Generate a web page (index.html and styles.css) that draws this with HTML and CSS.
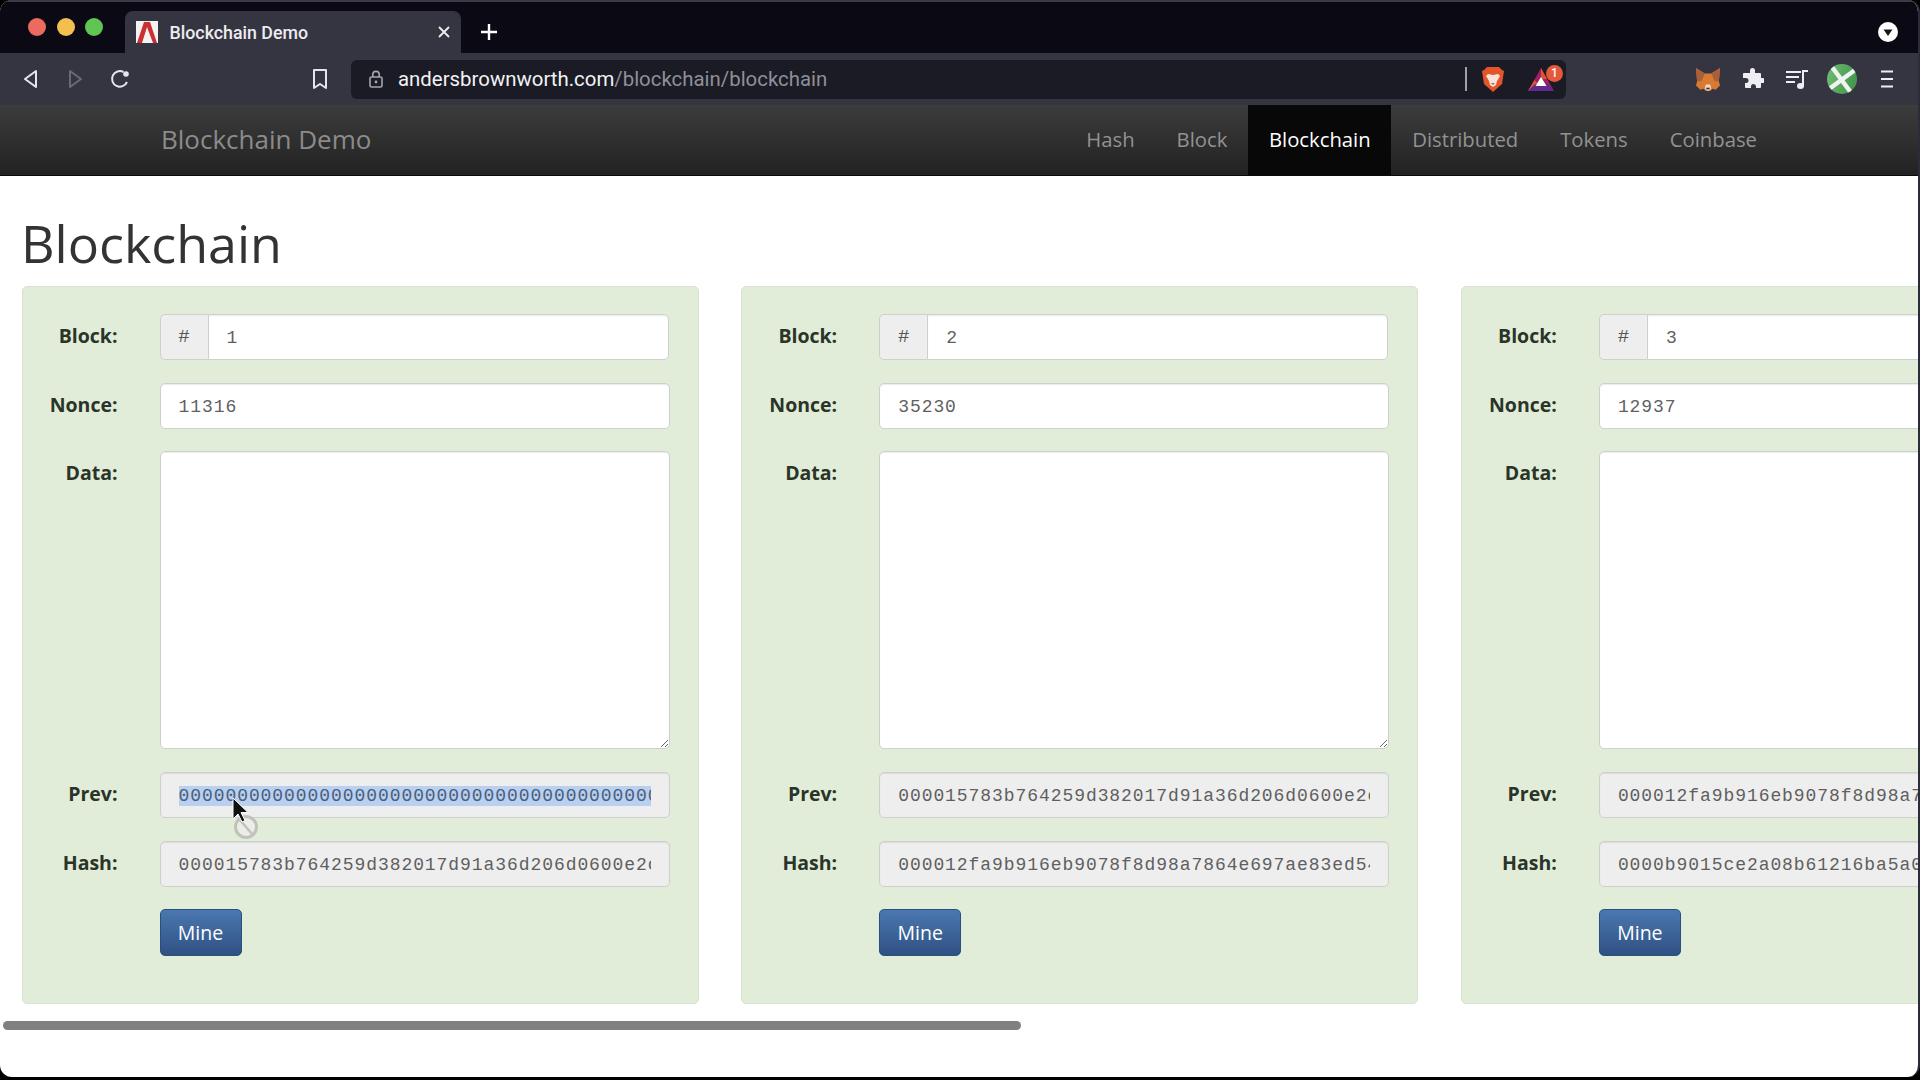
FILE: index.html
```html
<!DOCTYPE html>
<html lang="en">
<head>
<meta charset="utf-8">
<title>Blockchain Demo</title>
<link rel="stylesheet" href="styles.css">
</head>
<body>
<div class="window">
  <div class="tabstrip">
    <div class="lights"><i class="light red"></i><i class="light yellow"></i><i class="light green"></i></div>
    <div class="tab">
      <svg class="favicon" viewBox="0 0 22 22"><rect width="22" height="22" fill="#f4f2f2"/><path d="M8 1h6l7 21h-4L11 6 6 22H1z" fill="#c9302f"/></svg>
      <span class="tab-title">Blockchain Demo</span>
      <svg class="tab-close" viewBox="0 0 12 12"><path d="M1 1l10 10M11 1L1 11" stroke="#eee" stroke-width="1.8" fill="none"/></svg>
    </div>
    <svg class="newtab" viewBox="0 0 16 16"><path d="M8 0v16M0 8h16" stroke="#fff" stroke-width="2.4" fill="none"/></svg>
    <svg class="tabmenu" viewBox="0 0 20 20"><circle cx="10" cy="10" r="10" fill="#fff"/><path d="M5.500 7.500h9L10 14z" fill="#16151f"/></svg>
  </div>

  <div class="toolbar">
    <div class="nav-buttons">
      <svg class="tool-icon" viewBox="0 0 16 20"><path d="M13 2v16L2 10z" stroke="#e6e6ea" stroke-width="2" stroke-linejoin="round" fill="none"/></svg>
      <svg class="tool-icon" viewBox="0 0 16 20"><path d="M3 2v16l11-8z" stroke="#6a6a76" stroke-width="2" stroke-linejoin="round" fill="none"/></svg>
      <svg class="tool-icon reload" viewBox="0 0 20 20"><path d="M17 13A7.800 7.800 0 1 1 13.500 3" stroke="#e6e6ea" stroke-width="2" fill="none"/><circle cx="16" cy="5" r="2.800" fill="#e6e6ea"/></svg>
    </div>
    <svg class="bookmark" viewBox="0 0 16 22"><path d="M2 2h12v18l-6-4-6 4z" stroke="#e6e6ea" stroke-width="2" stroke-linejoin="round" fill="none"/></svg>
    <div class="urlbar">
      <svg class="lock" viewBox="0 0 14 18"><rect x="1" y="7" width="12" height="10" rx="1.500" stroke="#a5a5ad" stroke-width="1.600" fill="none"/><path d="M3.800 7V4.600a3.200 3.200 0 0 1 6.400 0V7" stroke="#a5a5ad" stroke-width="1.600" fill="none"/><circle cx="7" cy="12" r="1.400" fill="#a5a5ad"/></svg>
      <span class="url"><b class="url-host">andersbrownworth.com</b>/blockchain/blockchain</span>
      <span class="url-sep"></span>
      <svg class="brave" viewBox="0 0 22 26"><path d="M5 1h12l3 3 2 1-2 13-9 8-9-8L0 5l2-1z" fill="#e2552b"/><path d="M6 8l5 1 5-1 2 2-3 5-1 4-3 2-3-2-1-4-3-5z" fill="#f8e3da"/><path d="M9 17h4l-2 2z" fill="#e2552b"/></svg>
      <div class="bat">
        <svg class="bat-icon" viewBox="0 0 26 23"><path d="M13 0l13 23H0z" fill="#9e1f63"/><path d="M13 0l6 11-6 0z" fill="#e2552b"/><path d="M0 23l6.500-11 4 5z" fill="#e2552b"/><path d="M0 23h26l-6-7H7z" fill="#5f2a8c"/><path d="M13 9l5.500 9h-11z" fill="#fff"/></svg>
        <span class="badge">1</span>
      </div>
    </div>
    <div class="extensions">
      <svg class="ext fox" viewBox="0 0 22 21"><path d="M0 0l8 5h6l8-5-1 12 1 4-4 4-3-1-2 2h-4l-2-2-3 1-4-4 1-4z" fill="#d97a32"/><path d="M0 0l8 5-3 7-4 0zM22 0l-8 5 3 7 4 0z" fill="#a9603a"/><path d="M9 15h4l1 4-3 2-3-2z" fill="#f1dcc8"/><path d="M9.500 18h3v1.500h-3z" fill="#2d2d2d"/></svg>
      <svg class="ext puzzle" viewBox="0 0 22 22"><path d="M8 2.500a2.500 2.500 0 0 1 5 0V5h5a1 1 0 0 1 1 1v4h1.500a2.500 2.500 0 0 1 0 5H19v4a1 1 0 0 1-1 1h-4v-1.500a2.500 2.500 0 0 0-5 0V20H4a1 1 0 0 1-1-1v-4h1a2.500 2.500 0 0 0 0-5H1V6a1 1 0 0 1 1-1h6z" fill="#eeeef2"/></svg>
      <svg class="ext playlist" viewBox="0 0 22 20"><path d="M0 3h15M0 8h13M0 13h9" stroke="#eeeef2" stroke-width="2" fill="none"/><path d="M17 17V2h5" stroke="#eeeef2" stroke-width="2" fill="none"/><ellipse cx="14.500" cy="17" rx="3.500" ry="3" fill="#eeeef2"/></svg>
      <svg class="avatar" viewBox="0 0 30 30"><defs><clipPath id="av"><circle cx="15" cy="15" r="15"/></clipPath><linearGradient id="avg" x1="0" y1="0" x2="1" y2="0.300"><stop offset="0" stop-color="#6fbf72"/><stop offset="1" stop-color="#46984f"/></linearGradient></defs><g clip-path="url(#av)"><rect width="30" height="30" fill="url(#avg)"/><path d="M5 3l20 27M28 6L2 25" stroke="#f0f3ef" stroke-width="4.500" fill="none"/></g></svg>
      <svg class="ext menu" viewBox="0 0 14 18"><path d="M1 1.500h12M1 9h12M1 16.500h12" stroke="#eeeef2" stroke-width="2" fill="none"/></svg>
    </div>
  </div>

  <nav class="navbar">
    <a class="brand">Blockchain Demo</a>
    <ul class="nav-links">
      <li class="nav-link">Hash</li>
      <li class="nav-link">Block</li>
      <li class="nav-link active">Blockchain</li>
      <li class="nav-link">Distributed</li>
      <li class="nav-link">Tokens</li>
      <li class="nav-link">Coinbase</li>
    </ul>
  </nav>

  <main class="main">
    <h1 class="title">Blockchain</h1>
    <div class="cards">
      <section class="card">
        <label class="lbl">Block:</label>
        <div class="group"><span class="addon">#</span><input class="ctl grouped" value="1" readonly></div>
        <label class="lbl">Nonce:</label>
        <input class="ctl" value="11316" readonly>
        <label class="lbl">Data:</label>
        <textarea class="ctl area" readonly></textarea>
        <label class="lbl">Prev:</label>
        <input class="ctl off" value="0000000000000000000000000000000000000000000000000000000000000000" readonly autofocus onfocus="this.select()">
        <label class="lbl">Hash:</label>
        <input class="ctl off" value="000015783b764259d382017d91a36d206d0600e2c2af3f0ce3c8d5e86d1d06b2" readonly>
        <button class="mine">Mine</button>
      </section>
      <section class="card">
        <label class="lbl">Block:</label>
        <div class="group"><span class="addon">#</span><input class="ctl grouped" value="2" readonly></div>
        <label class="lbl">Nonce:</label>
        <input class="ctl" value="35230" readonly>
        <label class="lbl">Data:</label>
        <textarea class="ctl area" readonly></textarea>
        <label class="lbl">Prev:</label>
        <input class="ctl off" value="000015783b764259d382017d91a36d206d0600e2c2af3f0ce3c8d5e86d1d06b2" readonly>
        <label class="lbl">Hash:</label>
        <input class="ctl off" value="000012fa9b916eb9078f8d98a7864e697ae83ed54f5146bd84452cdafd043c19" readonly>
        <button class="mine">Mine</button>
      </section>
      <section class="card">
        <label class="lbl">Block:</label>
        <div class="group"><span class="addon">#</span><input class="ctl grouped" value="3" readonly></div>
        <label class="lbl">Nonce:</label>
        <input class="ctl" value="12937" readonly>
        <label class="lbl">Data:</label>
        <textarea class="ctl area" readonly></textarea>
        <label class="lbl">Prev:</label>
        <input class="ctl off" value="000012fa9b916eb9078f8d98a7864e697ae83ed54f5146bd84452cdafd043c19" readonly>
        <label class="lbl">Hash:</label>
        <input class="ctl off" value="0000b9015ce2a08b61216ba5a0778545bf4ddd7ceb7bbd85dd8062b29a9140bf" readonly>
        <button class="mine">Mine</button>
      </section>
    </div>
    <div class="scrollbar"><div class="thumb"></div></div>
    <svg class="cursor" viewBox="0 0 32 50"><circle cx="14" cy="30" r="10.500" fill="#ecece8" stroke="#c2c2bb" stroke-width="3"/><path d="M8 23l12 14" stroke="#c2c2bb" stroke-width="2.500"/><path d="M1 1v21l5-5 4 8 3-1.500-4-8h7z" fill="#111" stroke="#fff" stroke-width="1"/></svg>
  </main>
</div>
</body>
</html>
```
FILE: styles.css
```css
* { box-sizing: border-box; }
html, body { margin: 0; height: 100%; overflow: hidden; }
body { background: #000; }

.window {
  position: relative;
  width: 1920px;
  height: 1077px;
  background: #fff;
  border-radius: 12px;
  overflow: hidden;
  display: flex;
  flex-direction: column;
  border-right: 2px solid #2b2b3a;
}

/* tab strip */
.tabstrip {
  height: 53px;
  flex: none;
  display: flex;
  align-items: flex-end;
  background: #0b0a14;
  border-top: 2px solid #3c3c46;
  padding-left: 28px;
  padding-right: 20px;
}
.lights { display: flex; gap: 10.500px; align-self: flex-start; margin-top: 16px; width: 96.500px; }
.light { display: block; width: 18px; height: 18px; border-radius: 50%; }
.red { background: #ec6a5e; }
.yellow { background: #f4bf4f; }
.green { background: #61c554; }
.tab {
  width: 336px;
  height: 42px;
  background: #353542;
  border-radius: 8px 8px 0 0;
  display: flex;
  align-items: center;
  padding-left: 11px;
  padding-right: 11px;
}
.favicon { width: 22px; height: 22px; flex: none; }
.tab-title { margin-left: 12px; font: 500 17.800px Roboto, sans-serif; color: #ececf0; flex: 1; }
.tab-close { width: 12px; height: 12px; flex: none; }
.newtab { width: 16px; height: 16px; margin: 0 0 13px 20px; }
.tabmenu { width: 20px; height: 20px; margin: 0 0 11px auto; }

/* toolbar */
.toolbar {
  height: 52px;
  flex: none;
  display: flex;
  align-items: center;
  background: #353542;
}
.nav-buttons { display: flex; align-items: center; gap: 26px; margin-left: 22px; }
.tool-icon { width: 18px; height: 20px; }
.reload { width: 20px; }
.bookmark { width: 16px; height: 22px; margin-left: 182px; }
.urlbar {
  margin-left: 23px;
  width: 1215px;
  height: 39px;
  background: #1b1b25;
  border-radius: 6px;
  display: flex;
  align-items: center;
  padding-left: 18px;
}
.lock { width: 14px; height: 18px; flex: none; }
.url { margin-left: 15px; font: 400 20.400px Roboto, sans-serif; color: #8f8f98; flex: 1; }
.url-host { font-weight: 400; color: #f2f2f5; }
.url-sep { width: 2px; height: 24px; background: #a0a0a8; }
.brave { width: 22px; height: 26px; margin-left: 15px; }
.bat { position: relative; width: 26px; height: 23px; margin-left: 24px; margin-right: 12px; }
.bat-icon { width: 26px; height: 23px; display: block; }
.badge {
  position: absolute;
  right: -9px;
  top: -3px;
  width: 17px;
  height: 17px;
  border-radius: 50%;
  background: #e5583a;
  color: #fff;
  font: 500 12px/17px Roboto, sans-serif;
  text-align: center;
}
.extensions { display: flex; align-items: center; margin-left: 130px; }
.ext { display: block; flex: none; }
.fox { width: 24px; height: 23px; }
.puzzle { width: 22px; height: 22px; margin-left: 22px; }
.playlist { width: 22px; height: 20px; margin-left: 22px; }
.avatar { width: 30px; height: 30px; margin-left: 19px; display: block; }
.menu { width: 14px; height: 18px; margin-left: 23px; }

/* site navbar */
.navbar {
  height: 71px;
  flex: none;
  display: flex;
  align-items: stretch;
  padding-left: 161px;
  padding-right: 140px;
  background: linear-gradient(#3c3c3c, #222);
  border-bottom: 1px solid #0a0a0a;
  font-family: "Open Sans", sans-serif;
}
.brand { align-self: center; font-size: 26px; color: #8b8b8b; margin-top: -3px; }
.nav-links { list-style: none; margin: 0 0 0 auto; padding: 0; display: flex; }
.nav-link { padding: 0 21px 2px; display: flex; align-items: center; font-size: 20.300px; color: #929292; }
.nav-link.active { background: #080808; color: #fff; padding: 0 20.500px 2px; }

/* main */
.main { flex: 1; padding-top: 38px; font-family: "Open Sans", sans-serif; }
.title { margin: -1px 0 13px 21px; font-size: 52px; line-height: 60px; font-weight: 400; color: #333; }
.cards { display: flex; gap: 42.700px; padding-left: 21.500px; overflow: hidden; }
.card {
  flex: none;
  width: 677px;
  height: 718px;
  background: #e1edd9;
  border: 1px solid #d7e3cf;
  border-radius: 5px;
  padding: 27px 28px 0 0;
  display: grid;
  grid-template-columns: 95px 1fr;
  grid-auto-rows: min-content;
  column-gap: 42px;
  row-gap: 22.670px;
  align-content: start;
}
.lbl { grid-column: 1; text-align: right; padding-top: 9px; font-size: 19.500px; line-height: 26px; font-weight: 700; color: #2a3427; }
.card > .ctl, .card > .group, .card > .mine { grid-column: 2; }
.ctl {
  display: block;
  width: 100%;
  height: 46px;
  padding: 2px 18px 0;
  border: 1px solid #cfcfcf;
  border-radius: 5px;
  background: #fff;
  color: #5f5f5f;
  font: 18px/24px "Liberation Mono", monospace;
  letter-spacing: 0.930px;
  box-shadow: inset 0 1px 1px rgba(0,0,0,.08);
  outline: none;
}
.ctl::selection { background: #b9d0f1; color: #4a5f7a; }
.off { background: #eee; }
.area { height: 298px; resize: vertical; }
.group { display: flex; height: 46px; margin-right: 1px; }
.addon {
  flex: none;
  width: 48px;
  display: flex;
  align-items: center;
  justify-content: center;
  background: #eee;
  border: 1px solid #cfcfcf;
  border-right: 0;
  border-radius: 5px 0 0 5px;
  color: #555;
  font: 19px "Liberation Mono", monospace;
}
.grouped { border-radius: 0 5px 5px 0; flex: 1; min-width: 0; }
.mine {
  width: 82px;
  height: 47px;
  padding: 0;
  border: 1px solid #2b4f7c;
  border-radius: 5px;
  background: linear-gradient(#4a78b0, #2f5183);
  color: #fff;
  font: 19.500px "Open Sans", sans-serif;
}

.scrollbar { height: 9px; margin: 17px 0 0 3px; }
.thumb { width: 1018px; height: 9px; background: #808080; border-radius: 5px; }
.cursor { position: absolute; left: 232px; top: 797px; width: 32px; height: 50px; }
```
